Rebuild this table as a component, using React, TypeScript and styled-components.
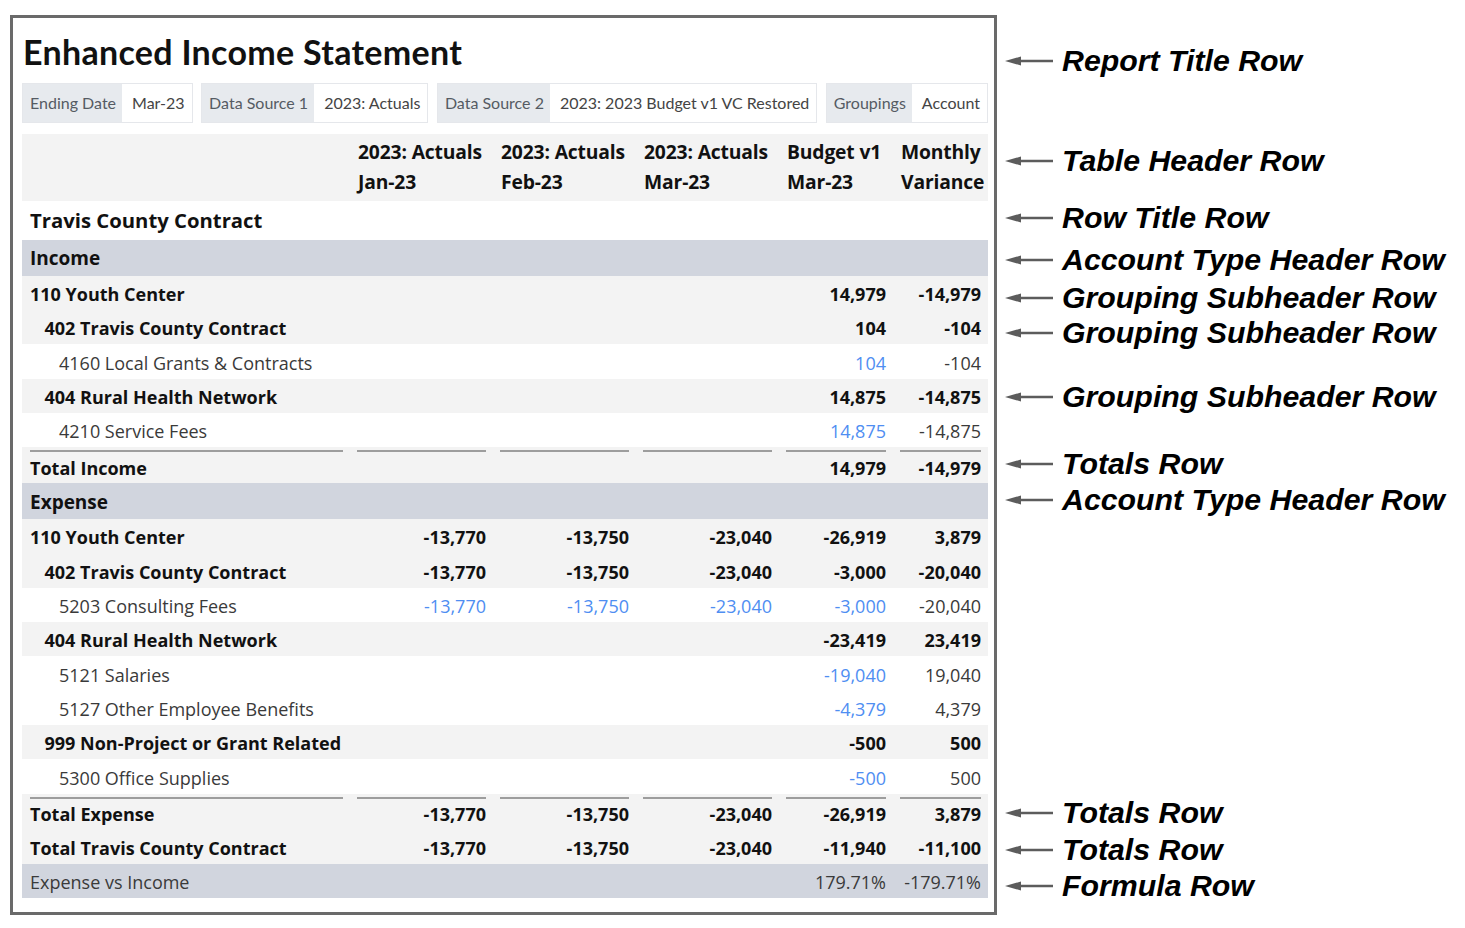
import React from 'react';
import styled, { createGlobalStyle } from 'styled-components';

const GlobalStyle = createGlobalStyle`
  html, body {
    margin: 0;
    background: #ffffff;
  }
`;

type Kind = 'title' | 'type' | 'group' | 'detail' | 'total' | 'formula';

interface ReportLine {
  label: string;
  kind: Kind;
  level?: number;
  rule?: boolean;
  values?: (string | null)[];
}

const FILTERS = [
  { label: 'Ending Date', value: 'Mar-23' },
  { label: 'Data Source 1', value: '2023: Actuals' },
  { label: 'Data Source 2', value: '2023: 2023 Budget v1 VC Restored' },
  { label: 'Groupings', value: 'Account' },
];

const HEADERS = [
  ['2023: Actuals', 'Jan-23'],
  ['2023: Actuals', 'Feb-23'],
  ['2023: Actuals', 'Mar-23'],
  ['Budget v1', 'Mar-23'],
  ['Monthly', 'Variance'],
];

const LINES: ReportLine[] = [
  { label: 'Travis County Contract', kind: 'title' },
  { label: 'Income', kind: 'type' },
  { label: '110 Youth Center', kind: 'group', level: 0, values: [null, null, null, '14,979', '-14,979'] },
  { label: '402 Travis County Contract', kind: 'group', level: 1, values: [null, null, null, '104', '-104'] },
  { label: '4160 Local Grants & Contracts', kind: 'detail', level: 2, values: [null, null, null, '104', '-104'] },
  { label: '404 Rural Health Network', kind: 'group', level: 1, values: [null, null, null, '14,875', '-14,875'] },
  { label: '4210 Service Fees', kind: 'detail', level: 2, values: [null, null, null, '14,875', '-14,875'] },
  { label: 'Total Income', kind: 'total', rule: true, values: [null, null, null, '14,979', '-14,979'] },
  { label: 'Expense', kind: 'type' },
  { label: '110 Youth Center', kind: 'group', level: 0, values: ['-13,770', '-13,750', '-23,040', '-26,919', '3,879'] },
  { label: '402 Travis County Contract', kind: 'group', level: 1, values: ['-13,770', '-13,750', '-23,040', '-3,000', '-20,040'] },
  { label: '5203 Consulting Fees', kind: 'detail', level: 2, values: ['-13,770', '-13,750', '-23,040', '-3,000', '-20,040'] },
  { label: '404 Rural Health Network', kind: 'group', level: 1, values: [null, null, null, '-23,419', '23,419'] },
  { label: '5121 Salaries', kind: 'detail', level: 2, values: [null, null, null, '-19,040', '19,040'] },
  { label: '5127 Other Employee Benefits', kind: 'detail', level: 2, values: [null, null, null, '-4,379', '4,379'] },
  { label: '999 Non-Project or Grant Related', kind: 'group', level: 1, values: [null, null, null, '-500', '500'] },
  { label: '5300 Office Supplies', kind: 'detail', level: 2, values: [null, null, null, '-500', '500'] },
  { label: 'Total Expense', kind: 'total', rule: true, values: ['-13,770', '-13,750', '-23,040', '-26,919', '3,879'] },
  { label: 'Total Travis County Contract', kind: 'total', values: ['-13,770', '-13,750', '-23,040', '-11,940', '-11,100'] },
  { label: 'Expense vs Income', kind: 'formula', values: [null, null, null, '179.71%', '-179.71%'] },
];

const NOTES = [
  { y: 61, text: 'Report Title Row' },
  { y: 161, text: 'Table Header Row' },
  { y: 218, text: 'Row Title Row' },
  { y: 260, text: 'Account Type Header Row' },
  { y: 298, text: 'Grouping Subheader Row' },
  { y: 333, text: 'Grouping Subheader Row' },
  { y: 397, text: 'Grouping Subheader Row' },
  { y: 464, text: 'Totals Row' },
  { y: 500, text: 'Account Type Header Row' },
  { y: 813, text: 'Totals Row' },
  { y: 850, text: 'Totals Row' },
  { y: 886, text: 'Formula Row' },
];

const COLUMNS = '328px 143px 143px 143px 114px 95px';

const ROW_BG: Record<Kind, string> = {
  title: '#ffffff',
  type: '#d1d5de',
  group: '#f3f3f3',
  detail: '#ffffff',
  total: '#f3f3f3',
  formula: '#d1d5de',
};

const ROW_HEIGHT: Record<Kind, number> = {
  title: 39,
  type: 36,
  group: 34.3,
  detail: 34.3,
  total: 34.3,
  formula: 34,
};

// body rows sit their text a touch lower than the plain centre
const TEXT_NUDGE: Record<Kind, number> = {
  title: 0,
  type: 1,
  group: 2,
  detail: 2,
  total: 2,
  formula: 2,
};

const Page = styled.div`
  display: flex;
  align-items: flex-start;
  padding: 15px 0 0 10px;
`;

const ReportFrame = styled.div`
  box-sizing: border-box;
  width: 987px;
  height: 900px;
  border: 3px solid #6a6a6a;
  padding: 14px 6px 0 9px;
  background: #ffffff;
`;

const ReportTitle = styled.h1`
  margin: 0 0 10px 1px;
  font-family: Lato, 'Liberation Sans', sans-serif;
  font-size: 34px;
  font-weight: 700;
  letter-spacing: 0.3px;
  line-height: 1.2;
  color: #111111;
`;

const FilterBar = styled.div`
  display: flex;
  justify-content: space-between;
  margin-bottom: 11px;
`;

const Filter = styled.div`
  display: flex;
  flex-shrink: 0;
  height: 40px;
  box-sizing: border-box;
  border: 1px solid #e5e7eb;
  font-family: Lato, 'Liberation Sans', sans-serif;
  font-size: 16px;
  white-space: nowrap;
`;

const FilterLabel = styled.span`
  display: flex;
  align-items: center;
  padding: 0 6px 0 7px;
  background: #e7eaee;
  color: #555b63;
`;

const FilterValue = styled.span`
  display: flex;
  align-items: center;
  padding: 0 7px 0 10px;
  background: #ffffff;
  color: #444444;
`;

const Table = styled.div`
  width: 966px;
  font-family: 'Open Sans', 'Noto Sans', sans-serif;
`;

const HeaderRow = styled.div`
  display: grid;
  grid-template-columns: ${COLUMNS};
  height: 67px;
  align-items: center;
  background: #f3f3f3;
`;

const HeaderCell = styled.div`
  padding: 0 6px 0 8px;
  font-size: 19.3px;
  font-weight: 700;
  letter-spacing: -0.15px;
  line-height: 30px;
  color: #111111;
  white-space: nowrap;
`;

const Row = styled.div<{ $kind: Kind; $rule?: boolean }>`
  display: grid;
  grid-template-columns: ${COLUMNS};
  height: ${(p) => (p.$rule ? 36 : ROW_HEIGHT[p.$kind])}px;
  background: ${(p) => ROW_BG[p.$kind]};
`;

const Cell = styled.div<{ $rule?: boolean; $label?: boolean }>`
  display: flex;
  padding: ${(p) => (p.$rule ? '3px' : '0')} 7px 0 ${(p) => (p.$label ? 8 : 7)}px;
  min-width: 0;
`;

const CellBody = styled.div<{ $rule?: boolean; $label?: boolean; $indent: number; $nudge: number }>`
  flex: 1;
  display: flex;
  align-items: center;
  justify-content: ${(p) => (p.$label ? 'flex-start' : 'flex-end')};
  padding-left: ${(p) => p.$indent}px;
  padding-top: ${(p) => (p.$rule ? 0 : p.$nudge)}px;
  border-top: ${(p) => (p.$rule ? '2px solid #9d9d9d' : 'none')};
  white-space: nowrap;
`;

const LabelText = styled.span<{ $kind: Kind }>`
  font-size: ${(p) => (p.$kind === 'title' ? 20.3 : p.$kind === 'type' ? 19 : 18)}px;
  font-weight: ${(p) => (p.$kind === 'detail' || p.$kind === 'formula' ? 400 : 700)};
  color: ${(p) => (p.$kind === 'detail' || p.$kind === 'formula' ? '#3a3a3a' : '#111111')};
`;

const Amount = styled.span<{ $bold?: boolean; $link?: boolean }>`
  font-size: 18px;
  font-weight: ${(p) => (p.$bold ? 700 : 400)};
  color: ${(p) => (p.$link ? '#4f8ef2' : p.$bold ? '#111111' : '#3a3a3a')};
`;

const Notes = styled.div`
  position: relative;
  flex: 1;
  align-self: stretch;
  margin-left: 8px;
`;

const Note = styled.div<{ $top: number }>`
  position: absolute;
  left: 0;
  top: ${(p) => p.$top}px;
  height: 36px;
  display: flex;
  align-items: center;
  gap: 9px;
  white-space: nowrap;
`;

const NoteText = styled.span`
  font-family: 'Liberation Sans', Arial, sans-serif;
  font-size: 30.3px;
  font-style: italic;
  font-weight: 700;
  color: #000000;
`;

function LeftArrow() {
  return (
    <svg width="48" height="12" viewBox="0 0 48 12">
      <polygon points="0,6 16,1.5 16,10.5" fill="#5c5c5c" />
      <line x1="14" y1="6" x2="48" y2="6" stroke="#5c5c5c" strokeWidth="2.4" />
    </svg>
  );
}

function ReportRow({ line }: { line: ReportLine }) {
  const indent = (line.level ?? 0) * 14.5;
  const isDetail = line.kind === 'detail';
  const bold = line.kind === 'group' || line.kind === 'total';
  const nudge = TEXT_NUDGE[line.kind];
  return (
    <Row $kind={line.kind} $rule={line.rule}>
      <Cell $rule={line.rule} $label>
        <CellBody $rule={line.rule} $label $indent={indent} $nudge={nudge}>
          <LabelText $kind={line.kind}>{line.label}</LabelText>
        </CellBody>
      </Cell>
      {[0, 1, 2, 3, 4].map((i) => {
        const value = line.values?.[i] ?? null;
        return (
          <Cell key={i} $rule={line.rule}>
            <CellBody $rule={line.rule} $indent={0} $nudge={nudge}>
              {value && (
                <Amount $bold={bold} $link={isDetail && i < 4}>
                  {value}
                </Amount>
              )}
            </CellBody>
          </Cell>
        );
      })}
    </Row>
  );
}

export default function App() {
  return (
    <>
      <GlobalStyle />
      <Page>
        <ReportFrame>
          <ReportTitle>Enhanced Income Statement</ReportTitle>
          <FilterBar>
            {FILTERS.map((f) => (
              <Filter key={f.label}>
                <FilterLabel>{f.label}</FilterLabel>
                <FilterValue>{f.value}</FilterValue>
              </Filter>
            ))}
          </FilterBar>
          <Table>
            <HeaderRow>
              <HeaderCell />
              {HEADERS.map(([top, bottom], i) => (
                <HeaderCell key={i}>
                  {top}
                  <br />
                  {bottom}
                </HeaderCell>
              ))}
            </HeaderRow>
            {LINES.map((line, i) => (
              <ReportRow key={i} line={line} />
            ))}
          </Table>
        </ReportFrame>
        <Notes>
          {NOTES.map((n, i) => (
            <Note key={i} $top={n.y - 15 - 18}>
              <LeftArrow />
              <NoteText>{n.text}</NoteText>
            </Note>
          ))}
        </Notes>
      </Page>
    </>
  );
}
